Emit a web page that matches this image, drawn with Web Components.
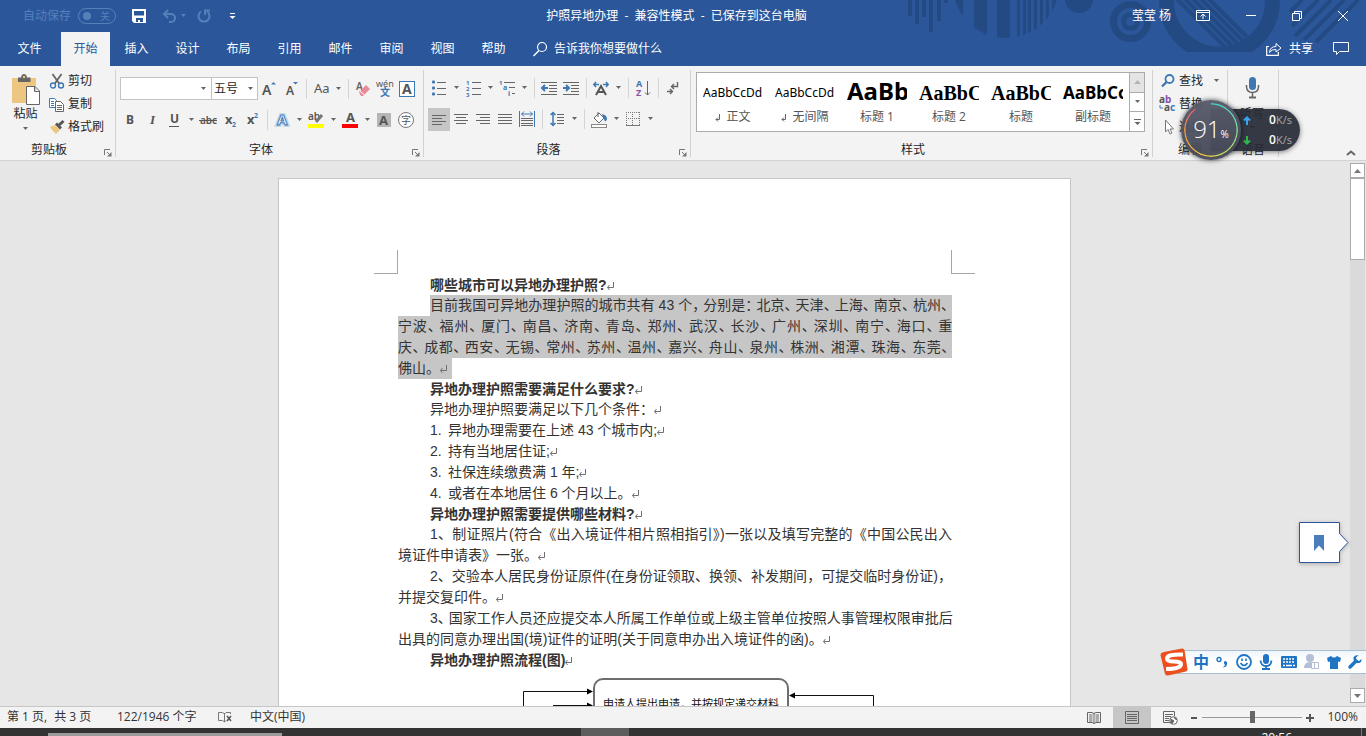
<!DOCTYPE html>
<html lang="zh-CN">
<head>
<meta charset="utf-8">
<title>护照异地办理 - Word</title>
<style>
html,body{margin:0;height:100%}
body{font:12px/16px "Open Sans","Noto Sans CJK SC",sans-serif;color:#262626;background:#e6e6e6;overflow:hidden}
</style>
</head>
<body>
<word-app></word-app>
<script>
const define = (name, html, connected) => customElements.define(name, class extends HTMLElement {
  constructor() {
    super();
    const t = document.createElement('template');
    t.innerHTML = html;
    this.attachShadow({mode: 'open'}).append(t.content.cloneNode(true));
  }
  connectedCallback() { if (connected) connected.call(this, this.shadowRoot); }
});

const G = '#666', B = '#3e78b3';
const lines = (rows, c = G) => rows.map(([x1, y, x2]) => `<path d="M${x1} ${y}H${x2}" stroke="${c}"/>`).join('');
const T = (x, y, s, size, fill, extra = '') => `<text x="${x}" y="${y}" font-size="${size}" fill="${fill}" ${extra}>${s}</text>`;
/* name: [width, height, markup] */
const ICONS = {
  save: [14, 14, `<path d="M0 0H14V14H2L0 12Z" fill="#fff"/><path d="M2 2H12V6.500H2ZM4 9H11V13H8V11H6V13H4Z" fill="#2b579a"/>`],
  undo: [14, 14, `<path d="M1.500 5H9a4 4 0 0 1 0 8H7" fill="none" stroke="#5580ba" stroke-width="2"/><path d="M6 1L2 5L6 9" fill="none" stroke="#5580ba" stroke-width="2"/>`],
  redo: [14, 14, `<path d="M4 2.500A5.500 5.500 0 1 0 10 2.500" fill="none" stroke="#5580ba" stroke-width="2"/><path d="M8 6V1.500H13" fill="none" stroke="#5580ba" stroke-width="2"/>`],
  custom: [7, 8, `<path d="M1 1.500H6" stroke="#fff"/><path d="M.5 4H6.500L3.500 7Z" fill="#fff"/>`],
  caret: [7, 4, `<path d="M1 0H6L3.500 3Z" fill="currentColor"/>`],
  caretup: [7, 4, `<path d="M0 4H7L3.500 0Z" fill="currentColor"/>`],
  caretdn: [7, 4, `<path d="M0 0H7L3.500 4Z" fill="currentColor"/>`],
  more: [7, 8, `<path d="M0 1.500H7" stroke="${G}"/><path d="M.5 4H6.500L3.500 7Z" fill="${G}"/>`],
  ribbonopt: [14, 12, `<path d="M.5 .5H13.500V10.500H.5ZM.5 2.500H13.500M7 4V9M4.500 6.500L7 4L9.500 6.500" fill="none" stroke="#fff"/>`],
  min: [10, 12, `<path d="M0 5.500H10" stroke="#fff"/>`],
  restore: [12, 12, `<path d="M1.500 3.500H8.500V10.500H1.500ZM3.500 3.500V1.500H10.500V8.500H8.500" fill="none" stroke="#fff"/>`],
  close: [12, 12, `<path d="M1 1L11 11M11 1L1 11" stroke="#fff"/>`],
  search: [16, 16, `<circle cx="10" cy="6" r="4.500" fill="none" stroke="#fff" stroke-width="1.200"/><path d="M7 9.500L1.500 15" stroke="#fff" stroke-width="1.400"/>`],
  share: [16, 14, `<path d="M3 4.500H.7V13.300H12.300V10" fill="none" stroke="#fff" stroke-width="1.200"/><path d="M3.500 10.500Q4 4.500 10 4.500V1.500L15 6L10 10V7.500Q5.500 7 3.500 10.500Z" fill="none" stroke="#fff"/>`],
  comment: [16, 15, `<path d="M.5 1.500H15.500V10.500H6.500L3.500 13.500V10.500H.5Z" fill="none" stroke="#fff"/>`],
  paste: [28, 32, `<rect x="0" y="4" width="24" height="25" rx="1" fill="#edc681"/><path d="M6 8V3.500H9Q9.500 0 12 0T15 3.500H18.500V8Z" fill="#666"/><circle cx="12" cy="3" r="1.200" fill="#edc681"/><path d="M14.500 12.500H23L27.500 17V30.500H14.500ZM22.500 12.500V17.500H27.500" fill="#fff" stroke="${G}"/>`],
  cut: [16, 16, `<path d="M3.500 1L10.500 11M12.500 1L5.500 11" stroke="${G}" stroke-width="1.800"/><circle cx="4" cy="12.500" r="2.500" fill="none" stroke="${B}" stroke-width="1.400"/><circle cx="12" cy="12.500" r="2.500" fill="none" stroke="${B}" stroke-width="1.400"/>`],
  copy: [16, 16, `<path d="M.5 2.500H5.500L7.500 4.500V11.500H.5ZM2 5.500H5M2 7.500H5M2 9.500H5" fill="#fff" stroke="${B}"/><path d="M6.500 5.500H11.500L14.500 8.500V15.500H6.500ZM8 9.500H13M8 11.500H13M8 13.500H13" fill="#fff" stroke="${G}"/>`],
  brush: [16, 16, `<path d="M1 8L6 6L11 11L7 15Q5 13 4 12T1 8Z" fill="#edc681"/><path d="M6 5.500L8 3.500L13 8.500L11 10.500Z" fill="#555"/><path d="M10 6L14.500 2" stroke="#555" stroke-width="3"/>`],
  launch: [8, 8, `<path d="M.5 6V.5H6M3 3L6.500 6.500" fill="none" stroke="#777"/><path d="M7.500 3V7.500H3Z" fill="#777"/>`],
  grow: [16, 16, T(1, 14, 'A', 14, '#555', 'font-weight="600"') + `<path d="M10 3.500H15L12.500 1Z" fill="${B}"/>`],
  shrink: [16, 16, T(3, 14, 'A', 12, '#555', 'font-weight="600"') + `<path d="M10 1H15L12.500 3.500Z" fill="${B}"/>`],
  aa: [18, 16, T(2, 12, 'Aa', 13, '#555')],
  eraser: [16, 16, T(1, 9, 'A', 10, '#666', 'font-weight="600"') + `<path d="M4 11L11 4L15 8L8 15H6Z" fill="#e8899a"/><path d="M5 10L9.500 14" stroke="#fff"/>`],
  wen: [16, 16, T(-1, 6, 'wén', 9, '#555') + T(3, 15, '文', 10, B, 'font-weight="bold"')],
  boxa: [16, 16, `<rect x=".5" y=".5" width="15" height="15" fill="#fff" stroke="${B}"/>` + T(3, 13, 'A', 14, '#555', 'font-weight="bold"')],
  bold: [16, 16, T(4, 12, 'B', 12, '#555', 'font-weight="bold"')],
  italic: [16, 16, T(6, 12, 'I', 13, '#555', 'font-style="italic" font-weight="bold" style="font-family:Liberation Serif"')],
  under: [16, 16, T(4, 11, 'U', 12, '#555', 'font-weight="bold"') + `<path d="M3 14.500H13" stroke="#555"/>`],
  strike: [18, 16, T(1, 12, 'abc', 10, '#555', 'font-weight="600"') + `<path d="M0 8.500H18" stroke="#555"/>`],
  sub: [16, 16, T(3, 12, 'x', 13, '#555', 'font-weight="bold"') + T(10, 15, '2', 7, B, 'font-weight="bold"')],
  sup: [16, 16, T(3, 12, 'x', 13, '#555', 'font-weight="bold"') + T(10, 6, '2', 7, B, 'font-weight="bold"')],
  glow: [16, 16, T(3, 13, 'A', 15, '#fff', `font-weight="bold" stroke="#c3d9ee" stroke-width="4"`) + T(3, 13, 'A', 15, '#fff', `font-weight="bold" stroke="${B}" stroke-width="1"`)],
  hilite: [16, 16, T(0, 8, 'ab', 10, '#555', 'font-weight="600"') + `<path d="M8 10L14 3" stroke="#777" stroke-width="3"/><rect y="12" width="16" height="4" fill="#ff0"/>`],
  color: [16, 16, T(4, 10, 'A', 13, '#555', 'font-weight="bold"') + `<rect y="12" width="16" height="4" fill="#f00"/>`],
  shade: [14, 14, `<rect width="14" height="14" fill="#b5b5b5"/>` + T(2, 12, 'A', 13, '#555', 'font-weight="bold"')],
  circle: [16, 16, `<circle cx="8" cy="8" r="7.500" fill="#fff" stroke="#777"/>` + T(3, 12, '字', 10, '#555')],
  bullets: [14, 16, [2, 8, 14].map(y => `<rect y="${y - 1.5}" width="3" height="3" rx="1" fill="${B}"/>`).join('') + lines([[5, 2.5, 14], [5, 8.5, 14], [5, 14.5, 14]])],
  numbers: [15, 16, ['1', '2', '3'].map((n, i) => T(0, 5 + i * 6, n, 6, B, 'font-weight="bold"')).join('') + lines([[6, 2.5, 15], [6, 8.5, 15], [6, 14.5, 15]])],
  multi: [17, 17, T(0, 5, '1', 6, B, 'font-weight="bold"') + T(4, 10, 'a', 7, B, 'font-weight="bold"') + T(9, 16, 'i', 7, B, 'font-weight="bold"') + lines([[5, 2.5, 16], [10, 7.5, 16], [13, 13.5, 16]])],
  outdent: [16, 14, lines([[0, 1.5, 16], [8, 4.5, 16], [8, 7.5, 16], [8, 10.5, 16], [0, 13.5, 16]]) + `<path d="M7 7H1M4 4L1 7L4 10" fill="none" stroke="${B}" stroke-width="2"/>`],
  indent: [16, 14, lines([[0, 1.5, 16], [8, 4.5, 16], [8, 7.5, 16], [8, 10.5, 16], [0, 13.5, 16]]) + `<path d="M0 7H6M3 4L6 7L3 10" fill="none" stroke="${B}" stroke-width="2"/>`],
  asian: [16, 14, `<path d="M3 14L8 5L13 14M5 11H11" fill="none" stroke="#555" stroke-width="2"/><path d="M6 3.500H1M3 1L.8 3.500L3 6M10 3.500H15M13 1L15.200 3.500L13 6" fill="none" stroke="${B}" stroke-width="1.500"/>`],
  sort: [14, 17, T(0, 7, 'A', 9, B, 'font-weight="bold"') + T(0, 16, 'Z', 9, '#8b50a8', 'font-weight="bold"') + `<path d="M11.500 1V15M9 12.500L11.500 15L14 12.500" fill="none" stroke="${G}"/>`],
  marks: [12, 14, `<path d="M10.500 1V5.500H5M7 3L4.500 5.500L7 8" fill="none" stroke="${G}" stroke-width="1.400"/><path d="M0 10.500H5M3 8L5.500 10.500L3 13" fill="none" stroke="${G}" stroke-width="1.400"/>`],
  left: [14, 12, lines([[0, 1.5, 14], [0, 4.5, 10], [0, 7.5, 14], [0, 10.5, 10]])],
  center: [14, 12, lines([[0, 1.5, 14], [2, 4.5, 12], [0, 7.5, 14], [2, 10.5, 12]])],
  right: [14, 12, lines([[0, 1.5, 14], [4, 4.5, 14], [0, 7.5, 14], [4, 10.5, 14]])],
  justify: [14, 12, lines([[0, 1.5, 14], [0, 4.5, 14], [0, 7.5, 14], [0, 10.5, 14]])],
  dist: [16, 16, `<path d="M.5 0V16M15.500 0V16M2.500 3H13.500M5 .5L2.500 3L5 5.500M11 .5L13.500 3L11 5.500" fill="none" stroke="${B}"/>` + lines([[2, 7.5, 14], [2, 9.5, 14], [2, 12.5, 14], [2, 14.5, 14]])],
  spacing: [14, 16, `<path d="M3 2V14M.5 4L3 1.500L5.500 4M.5 12L3 14.500L5.500 12" fill="none" stroke="${B}" stroke-width="1.500"/>` + lines([[7, 3.5, 14], [7, 6.5, 14], [7, 9.5, 14], [7, 12.5, 14]])],
  bucket: [17, 17, `<path d="M3 7L8 2L13 7L8 12ZM7 1V6" fill="#fff" stroke="${G}"/><path d="M11 3Q16 4 16 8Q15.500 10 14 10.500L12 6Z" fill="${B}"/><rect x=".5" y="13.500" width="15" height="3" fill="#fff" stroke="#888"/>`],
  borders: [14, 14, `<path d="M.5 0V14M13.500 0V14M0 .5H14M6.500 0V14M0 6.500H14" stroke="#777" stroke-dasharray="1 1" fill="none"/><path d="M0 13.500H14" stroke="#777"/>`],
  find: [14, 14, `<circle cx="8.500" cy="5" r="4" fill="none" stroke="${B}" stroke-width="1.800"/><path d="M5.500 8L1 12.500" stroke="${B}" stroke-width="2.400"/>`],
  replace: [17, 16, T(0, 7, 'a', 10, '#555', 'font-weight="bold"') + T(6, 7, 'b', 10, '#8b50a8', 'font-weight="bold"') + T(5, 15, 'a', 10, '#555', 'font-weight="bold"') + T(11, 15, 'c', 10, B, 'font-weight="bold"') + `<path d="M1 9V12H4" fill="none" stroke="${B}"/>`],
  select: [14, 16, `<path d="M4.500 1V13L7 10.500L9 15L11 14L9 10H12.500Z" fill="#fff" stroke="#777"/>`],
  mic: [14, 24, `<rect x="4" y="1" width="7" height="13" rx="3.500" fill="#3e78b3"/><path d="M1.500 9V11Q2 16.500 7.500 16.500T13.500 11V9M7.500 17V21" fill="none" stroke="#666" stroke-width="1.500"/><path d="M4 21.500H11" stroke="#666" stroke-width="2"/>`],
  collapse: [10, 6, `<path d="M1 5L5 1.500L9 5" fill="none" stroke="#666" stroke-width="2"/>`],
  ret: [8, 8, `<path d="M6.500 0V5.500H.5M2.500 3L.5 5.500L2.500 8" fill="none" stroke="#707070"/>`],
  ret2: [6, 9, `<path d="M4.500 1V6.500H1M3 4.500L1 6.500L3 8.500" fill="none" stroke="#666"/>`],
  proof: [14, 12, `<path d="M6.500 2V11L4.500 9.500H.5V1.500H4.500L6.500 3L8 1.500H12.500V3M6.500 11L8 9.500" fill="none" stroke="#777"/><path d="M9 5L13 10M13 5L9 10" stroke="#555" stroke-width="1.500"/>`],
  read: [14, 13, `<path d="M7 2V12.500L5 11.500H.5V1.500H5L7 2.500L9 1.500H13.500V11.500H9L7 12.500M2 4H5.500M2 6H5.500M2 8H5.500M2 10H5.500M8.500 4H12M8.500 6H12M8.500 8H12M8.500 10H12" fill="none" stroke="#666"/>`],
  layout: [14, 13, `<path d="M.5 .5H13.500V12.500H.5ZM2 3.500H12M2 5.500H12M2 7.500H12M2 9.500H12" fill="none" stroke="#666"/>`],
  web: [15, 14, `<path d="M7 11.500H.5V.5H11.500V5M2 3.500H10M2 5.500H8M2 7.500H6M2 9.500H6" fill="none" stroke="#666"/><circle cx="10.500" cy="9.500" r="3.800" fill="#fff" stroke="#666"/><path d="M8 8L11 10L9 12.500L8 11ZM11 6.500L13.500 9L12.500 7.500Z" fill="#666" stroke="#666"/>`],
  minus: [8, 8, `<path d="M1 4H7" stroke="#555" stroke-width="2"/>`],
  plus: [8, 8, `<path d="M0 4H8M4 0V8" stroke="#555" stroke-width="2"/>`],
  bookmark: [10, 16, `<path d="M0 0H10V16L5 10.500L0 16Z" fill="#4a7ebb"/>`],
  up: [8, 9, `<path d="M4 9V3M1 4.500L4 1.500L7 4.500" fill="none" stroke="#37a6ee" stroke-width="2"/>`],
  down: [8, 9, `<path d="M4 0V6M1 4.500L4 7.500L7 4.500" fill="none" stroke="#2eb84a" stroke-width="2"/>`],
  sogou: [28, 28, `<path d="M4 4L22 .5Q24 .5 24.500 2L27.500 21Q27.500 23 26 23.500L8 27.500Q5.500 27.500 5 26L.5 7Q.5 4.500 4 4Z" fill="#ee4f1e"/><path d="M23 6.500Q7 6 7 10.500Q7 13.500 14 13.500Q21.500 13.500 21 16.500Q20 21 6 21" fill="none" stroke="#fff" stroke-width="4"/>`],
  dots: [12, 12, `<circle cx="3" cy="3.500" r="2" fill="none" stroke="#1f74c4" stroke-width="1.400"/><path d="M7 11Q9.500 10 8.500 8A1.600 1.600 0 1 1 11 7Q11.500 11 7 11.500Z" fill="#1f74c4"/>`],
  smile: [16, 16, `<circle cx="8" cy="8" r="7" fill="none" stroke="#1f74c4" stroke-width="1.800"/><path d="M4.500 9Q8 14 11.500 9M6 4.500V7M10 4.500V7" fill="none" stroke="#1f74c4" stroke-width="1.600"/>`],
  imemic: [14, 16, `<rect x="4" y="0" width="6" height="10" rx="3" fill="#1f74c4"/><path d="M1.500 6.500Q2 12 7 12T12.500 6.500M7 12V15M3 15H11" fill="none" stroke="#1f74c4" stroke-width="1.800"/>`],
  keyboard: [16, 12, `<rect width="16" height="12" rx="1" fill="#1f74c4"/><path d="M2 3H14M2 6H14" stroke="#fff" stroke-width="1.500" stroke-dasharray="2 1"/><path d="M2 9.500H4M5 9.500H11M12 9.500H14" stroke="#fff" stroke-width="1.500"/>`],
  person: [15, 16, `<circle cx="6" cy="4" r="4" fill="#b4bfd6"/><path d="M0 14Q0 8 6 8T12 14Z" fill="#b4bfd6"/><path d="M7.500 8.500H10.500V14.500H7.500ZM10.500 8.500H14.500V14.500H10.500Z" fill="#fff" stroke="#b4bfd6"/>`],
  shirt: [14, 13, `<path d="M0 2L4 0Q7 3 10 0L14 2L13 6L11 5.500V13H3V5.500L1 6Z" fill="#1f74c4"/>`],
  wrench: [14, 14, `<path d="M2 12L8 6" stroke="#1f74c4" stroke-width="3.500" stroke-linecap="round"/><path d="M13.500 4L11 6L8.500 5L8 2.500L10.500 .3Q7 -.5 5.500 2.500Q5 5.500 7 7T11 8Q14 7 13.500 4Z" fill="#1f74c4"/>`]
};

define('wd-icon', `<style>:host{display:inline-block;flex:none}svg{display:block;overflow:visible;font-family:"Noto Sans","Noto Sans CJK SC",sans-serif}</style>`, function (r) {
  if (r.querySelector('svg')) return;
  const [w, h, m] = ICONS[this.getAttribute('name')];
  r.innerHTML += `<svg width="${w}" height="${h}" viewBox="0 0 ${w} ${h}" aria-hidden="true">${m}</svg>`;
});
const I = n => `<wd-icon name="${n}"></wd-icon>`;
const RESET = `*{box-sizing:border-box}button{all:unset;box-sizing:border-box;display:flex;align-items:center;justify-content:center;white-space:nowrap}`;

/* square tool button, optionally with a drop-down caret */
define('tool-btn', `<style>${RESET}:host{display:flex;height:22px;color:#666}.m{width:22px;height:22px}.c{width:12px;height:22px}:host([on]) .m{background:#c6c6c6;height:23px}</style>`, function (r) {
  const n = this.getAttribute('icon'), l = this.getAttribute('label') || n;
  r.innerHTML += `<button class="m" aria-label="${l}">${I(n)}</button>` + (this.hasAttribute('caret') ? `<button class="c" aria-label="${l} 选项">${I('caret')}</button>` : '');
});
define('tool-sep', `<style>:host{display:flex;justify-content:center;width:8px;height:20px}i{width:1px;background:#d5d5d5}</style><i></i>`);
const tb = (n, c) => n === '|' ? '<tool-sep></tool-sep>' : `<tool-btn icon="${n.replace('+', '')}" ${n.endsWith('+') ? 'caret' : ''} ${n === 'left' ? 'on' : ''}></tool-btn>`;
const row = s => s.split(' ').map(n => tb(n)).join('');

/* row button: small icon and text */
define('text-btn', `<style>${RESET}:host{display:flex;height:23px}button{gap:4px}.i{width:15px;display:flex;justify-content:center}.k{margin-left:6px;color:#666;display:flex}</style>`, function (r) {
  r.innerHTML += `<button><span class="i">${I(this.getAttribute('icon'))}</span><slot></slot>${this.hasAttribute('caret') ? `<span class="k">${I('caret')}</span>` : ''}</button>`;
});

define('ribbon-group', `<style>${RESET}
:host{display:flex;flex-direction:column;height:87px;border-right:1px solid #d2d2d2;flex:none;box-sizing:border-box}
.body{flex:1;min-height:0}
footer{display:flex;height:14px;line-height:14px;align-items:flex-end}
footer span{flex:1;text-align:center}
:host([launcher]) footer span{padding-right:6px}
footer button{width:8px;margin-right:3px}</style>
<div class="body"><slot></slot></div><footer><span></span></footer>`, function (r) {
  r.querySelector('span').textContent = this.getAttribute('label');
  if (this.hasAttribute('launcher') && !r.querySelector('button')) r.querySelector('footer').insertAdjacentHTML('beforeend', `<button aria-label="更多">${I('launch')}</button>`);
});

define('title-bar', `<style>${RESET}
:host{display:grid;grid-template-columns:1fr auto 1fr;height:32px;align-items:center;color:#fff;position:relative;padding-right:13px}
.l,.r{display:flex;align-items:center}
.l{padding-left:23px;color:#5580ba}
.sw{width:38px;height:16px;border:1px solid #5580ba;border-radius:8px;margin:0 16px 0 7px;display:flex;align-items:center;justify-content:space-between;padding:0 5px 0 4px;font-size:10px}
.sw i{width:8px;height:8px;border-radius:50%;background:#5580ba}
h1{font:inherit;margin:0;white-space:pre}
.r{justify-content:flex-end;margin-right:4px}
.ub{margin-left:16px}.ca{margin:0 10px 0 4px}.cu{margin-left:18px}
.r span{margin-right:26px}.r button{margin-left:34px;width:12px}.r button:first-of-type{margin-left:0;margin-right:2px}
</style>
<div class="l"><span>自动保存</span><button class="sw" role="switch" aria-checked="false" aria-label="自动保存"><i></i>关</button>
<button aria-label="保存">${I('save')}</button><button class="ub" aria-label="撤消">${I('undo')}</button><button class="ca" aria-label="撤消列表">${I('caret')}</button><button aria-label="重做">${I('redo')}</button><button class="cu" aria-label="自定义">${I('custom')}</button></div>
<h1>护照异地办理  -  兼容性模式  -  已保存到这台电脑</h1>
<div class="r"><span>莹莹 杨</span><button aria-label="功能区显示选项">${I('ribbonopt')}</button><button aria-label="最小化">${I('min')}</button><button aria-label="还原">${I('restore')}</button><button aria-label="关闭">${I('close')}</button></div>`);

define('ribbon-tabs', `<style>${RESET}
:host{display:flex;height:34px;gap:2px;align-items:stretch;color:#fff;position:relative}
button{width:49px;padding-bottom:1px}
.file{width:59px}
.on{background:#f3f3f3;color:#2b579a}
label{display:flex;align-items:center;gap:6px;margin-left:12px}
input{all:unset;width:120px;color:#fff}input::placeholder{color:#fff;opacity:1}
.end{margin-left:auto;display:flex;gap:20px;padding-right:17px}
.end button{width:auto;gap:7px}
</style>
${['文件', '开始', '插入', '设计', '布局', '引用', '邮件', '审阅', '视图', '帮助'].map((t, i) => `<button class="${['file', 'on'][i] || ''}">${t}</button>`).join('')}
<label>${I('search')}<input placeholder="告诉我你想要做什么" aria-label="告诉我你想要做什么"></label>
<div class="end"><button>${I('share')}共享</button><button aria-label="批注">${I('comment')}</button></div>`);

define('header-art', `<style>:host{display:block;position:absolute;right:0;top:0;width:466px;height:66px}svg{display:block}</style>
<svg width="466" height="66" viewBox="900 0 466 66" fill="#244a84" aria-hidden="true">
<defs><clipPath id="c1"><circle cx="1006" cy="-15" r="53"/></clipPath><clipPath id="c2"><circle cx="1219.500" cy="1" r="46"/></clipPath><clipPath id="c3"><path d="M1150 0H1290V52H1150Z"/></clipPath></defs>
<path d="M908 0h4v16h-4zM915 0h4v24h-4zM922 0h4v17h-4zM929 0h4v32h-4zM937 0h4v21h-4zM944 0h4v3h-4z"/>
<path clip-path="url(#c1)" d="M950 0h13v40h-13zM974 0h13v40h-13zM997 0h13v40h-13zM1017 0h3v40h-3zM1023 0h3v40h-3zM1028 0h3v40h-3zM1034 0h3v40h-3zM1040 0h3v40h-3zM1046 0h3v40h-3zM1052 0h5v40h-5z"/>
<circle cx="1079" cy="-1" r="14"/>
<circle cx="1130.500" cy="21.500" r="17" fill="none" stroke="#244a84" stroke-width="7"/><circle cx="1130.500" cy="21.500" r="7" fill="none" stroke="#244a84" stroke-width="5"/>
<circle clip-path="url(#c3)" cx="1219.500" cy="1" r="53" fill="none" stroke="#244a84" stroke-width="15"/>
<g clip-path="url(#c2)" stroke="#244a84" stroke-width="4"><path d="M1170 -8L1230 52M1178 -8L1238 52M1186 -8L1246 52M1194 -8L1254 52M1202 -8L1262 52" /></g>
<path d="M1302 0L1290 12M1318 0L1292 26M1331 0L1295 36M1344 0L1304 40M1358 0L1316 42" stroke="#244a84" stroke-width="4"/>
</svg>`);

define('style-gallery', `<style>${RESET}
:host{display:flex;height:60px;border:1px solid #ababab;background:#fff}
.it{width:72px;flex-direction:column;justify-content:flex-start;padding-top:5px;color:#555}
b{display:block;width:60px;height:31px;overflow:hidden;font:400 12px/30px "Noto Sans",sans-serif;color:#000;white-space:nowrap;text-align:left}
.it span{display:flex;align-items:center;gap:5px;height:16px}
.nav{display:flex;flex-direction:column;width:15px;border-left:1px solid #ababab;color:#666}
.nav button{flex:1;border-bottom:1px solid #ababab}.nav button:first-child{background:#e4e4e4;color:#b5b5b5}.nav button:last-child{border:0}
.h1 b{font:700 24px/26px "Noto Sans",sans-serif}.h2 b{font:700 20px/31px "Liberation Serif",serif}.h3 b{font:700 17px/30px "Noto Sans",sans-serif}
</style>
${[['', 'AaBbCcDd', '正文', 1], ['', 'AaBbCcDd', '无间隔', 1], ['h1', 'AaBbC', '标题 1'], ['h2', 'AaBbC', '标题 2'], ['h2', 'AaBbC', '标题'], ['h3', 'AaBbCc', '副标题']].map(([c, s, l, m]) => `<button class="it ${c}"><b>${s}</b><span>${m ? I('ret2') : ''}${l}</span></button>`).join('')}
<div class="nav"><button aria-label="向上">${I('caretup')}</button><button aria-label="向下">${I('caret')}</button><button aria-label="更多样式">${I('more')}</button></div>`);

define('word-ribbon', `<style>${RESET}
:host{display:flex;height:95px;padding-top:4px;background:#f3f3f3;border-bottom:1px solid #d2d2d2;box-sizing:border-box}
.clip{width:116px}.clipb{display:flex;padding-left:12px;margin-top:-1px}
.paste{flex-direction:column;width:27px;margin-right:10px;padding-top:5px;justify-content:flex-start}
.paste wd-icon:last-child{margin-top:5px;color:#666}
.font{width:308px}.para{width:267px}.style{width:462px}.edit{width:75px}.voice{width:51px}
.rows{display:grid;gap:9px;padding:7px 0 0 4px}
.rows div{display:flex;align-items:center}
.font .rows{padding-left:3px}
.combo{display:flex;align-items:center;height:23px;border:1px solid #c3c3c3;background:#fff;color:#666}
.combo+.combo{border-left:0}
.combo input{all:unset;font-size:12px;color:#262626;padding-left:2px;height:20px;line-height:20px}
.f1{width:92px;margin-left:1px}.f1 input{width:77px}.f2{width:46px}.f2 input{width:33px}
.style style-gallery{margin:2px 7px 0 5px}
.eb{padding-left:7px;margin-top:-1px}
.mic{flex-direction:column;width:48px;padding-top:6px}.mic span{margin-top:6px}.mic wd-icon:last-child{margin-top:4px;color:#666}
.fold{margin:78px 10px 0 auto;height:10px}
</style>
<ribbon-group class="clip" label="剪贴板" launcher><div class="clipb">
<button class="paste">${I('paste')}<span>粘贴</span>${I('caret')}</button>
<div><text-btn icon="cut">剪切</text-btn><text-btn icon="copy">复制</text-btn><text-btn icon="brush">格式刷</text-btn></div></div></ribbon-group>
<ribbon-group class="font" label="字体" launcher><div class="rows">
<div><span class="combo f1"><input aria-label="字体">${I('caret')}</span><span class="combo f2"><input aria-label="字号" value="五号">${I('caret')}</span>${row('grow shrink | aa+ | eraser wen boxa')}</div>
<div>${row('bold italic under+ strike sub sup | glow+ hilite+ color+ shade circle')}</div></div></ribbon-group>
<ribbon-group class="para" label="段落" launcher><div class="rows">
<div>${row('bullets+ numbers+ multi+ | outdent indent | asian+ | sort | marks')}</div>
<div>${row('left center right justify dist | spacing+ | bucket+ borders+')}</div></div></ribbon-group>
<ribbon-group class="style" label="样式" launcher><style-gallery></style-gallery></ribbon-group>
<ribbon-group class="edit" label="编辑"><div class="eb"><text-btn icon="find" caret>查找</text-btn><text-btn icon="replace">替换</text-btn><text-btn icon="select" caret>选择</text-btn></div></ribbon-group>
<ribbon-group class="voice" label="语音"><button class="mic">${I('mic')}<span>听写</span>${I('caret')}</button></ribbon-group>
<button class="fold" aria-label="折叠功能区">${I('collapse')}</button>`);

/* text line of the document; punctuation is set tighter than a full cell */
const tight = s => s.replace(/[、，：]/g, '<i>$&</i>').replace('↵', I('ret'));
const P = (cls, s) => `<span class="${cls}">${tight(s)}</span>`;
define('doc-page', `<style>*{box-sizing:border-box}
:host{display:block;width:793px;background:#fff;border:1px solid #c6c6c6;padding:71px 95px 0;box-sizing:border-box;font:14px/21px "Liberation Sans","Noto Sans CJK SC",sans-serif;color:#333}
.marks{display:flex;justify-content:space-between;height:24px;margin-bottom:1px}
.marks i{width:24px;border:solid #a6a6a6;border-width:0 1px 1px 0}.marks i:last-child{border-width:0 0 1px 1px}
article{margin:0 23px 0 24px}
h2,p,ol{margin:0;padding:0;font-size:14px}
h2{line-height:20px;padding-left:32px}
p span,li{display:block;white-space:nowrap;height:21px}
ol{list-style:none;padding-left:32px}
li b{font-weight:400;display:inline-block;width:18px}
.in{margin-left:32px}.full{text-align-last:justify}
.sel span{background:#c6c6c6}.sel .end{width:54px}
i{font-style:normal;margin-right:-3px}.marks i{margin:0}
.wide i{margin-right:0}
figure{margin:8px 0 0 125px;display:grid;grid-template-columns:70px 196px 85px;height:80px}
.node{border:2px solid #6d6d6d;border-radius:10px;font-size:11px;line-height:16px;padding:16px 0;text-align:center;color:#111;white-space:nowrap}
svg{display:block}
</style>
<div class="marks"><i></i><i></i></div>
<article>
<h2>${tight('哪些城市可以异地办理护照?↵')}</h2>
<p class="sel">${P('in full', '目前我国可异地办理护照的城市共有 43 个，分别是：北京、天津、上海、南京、杭州、')}${P('full', '宁波、福州、厦门、南昌、济南、青岛、郑州、武汉、长沙、广州、深圳、南宁、海口、重')}${P('full', '庆、成都、西安、无锡、常州、苏州、温州、嘉兴、舟山、泉州、株洲、湘潭、珠海、东莞、')}${P('end', '佛山。↵')}</p>
<h2>${tight('异地办理护照需要满足什么要求?↵')}</h2>
<p class="wide">${P('in', '异地办理护照要满足以下几个条件：↵')}</p>
<ol>${['异地办理需要在上述 43 个城市内;↵', '持有当地居住证;↵', '社保连续缴费满 1 年;↵', '或者在本地居住 6 个月以上。↵'].map((s, i) => `<li><b>${i + 1}.</b>${tight(s)}</li>`).join('')}</ol>
<h2>${tight('异地办理护照需要提供哪些材料?↵')}</h2>
<p class="wide">${P('in full', '1、制证照片(符合《出入境证件相片照相指引》)一张以及填写完整的《中国公民出入')}${P('', '境证件申请表》一张。↵')}</p>
<p class="wide">${P('in full', '2、交验本人居民身份证原件(在身份证领取、换领、补发期间，可提交临时身份证)，')}${P('', '并提交复印件。↵')}</p>
<p>${P('in full', '3、国家工作人员还应提交本人所属工作单位或上级主管单位按照人事管理权限审批后')}${P('', '出具的同意办理出国(境)证件的证明(关于同意申办出入境证件的函)。↵')}</p>
<h2>${tight('异地办理护照流程(图)↵')}</h2>
<figure><svg width="70" height="80" aria-hidden="true"><path d="M.5 80V13.500H64M30 27.500H64" fill="none" stroke="#111"/><path d="M64 10.500V16.500L70 13.500ZM64 24.500V30.500L70 27.500Z"/></svg><div class="node">申请人提出申请，并按规定递交材料</div><svg width="85" height="80" aria-hidden="true"><path d="M6 17.500H84.500V80" fill="none" stroke="#111"/><path d="M6 14.500V20.500L0 17.500Z"/></svg></figure>
</article>`);

define('scroll-bar', `<style>${RESET}:host{display:flex;flex-direction:column;width:15px;background:#dadada;margin:2px 1px 3px 1px;color:#777}
button{height:15px;background:#fff;border:1px solid #ababab}.t{height:82px;background:#fff;border:1px solid #ababab}.s{flex:1}</style>
<button aria-label="向上滚动">${I('caretup')}</button><div class="t"></div><div class="s"></div><button aria-label="向下滚动">${I('caretdn')}</button>`);

define('status-bar', `<style>${RESET}
:host{display:flex;height:22px;border-top:1px solid #c6c6c6;background:#f3f3f3;align-items:stretch;color:#333;flex:none;box-sizing:border-box}
span{display:flex;align-items:center;white-space:pre;padding-bottom:1px;gap:7px}
.a{display:grid;padding-left:7px;grid-template-columns:110px 101px 32px auto}.b{margin-left:auto;align-items:stretch;display:flex}
.b button{width:38px}.b .on{background:#c6c6c6}.b .z{width:10px}
input{appearance:none;width:100px;margin:0 3px;background:none;align-self:center;height:12px}
input::-webkit-slider-runnable-track{height:1px;background:#999}
input::-webkit-slider-thumb{appearance:none;width:5px;height:12px;margin-top:-6px;background:#666}
.p{width:51px;justify-content:flex-end;padding-right:8px}
</style>
<div class="a"><span><b style="font-weight:400">第 1 页,</b>共 3 页</span><span>122/1946 个字</span><span>${I('proof')}</span><span>中文(中国)</span></div>
<div class="b"><button aria-label="阅读视图">${I('read')}</button><button class="on" aria-label="页面视图">${I('layout')}</button><button aria-label="Web 版式">${I('web')}</button><button class="z" aria-label="缩小">${I('minus')}</button><input type="range" value="50" aria-label="缩放"><button class="z" aria-label="放大">${I('plus')}</button><span class="p">100%</span></div>`);

define('task-bar', `<style>:host{display:flex;height:8px;overflow:hidden;background:#333;color:#fff;flex:none;align-items:flex-start;padding:0 4px 0 48px}
.s{width:234px;height:3px;background:#9b9b9b;margin-top:5px}.t{width:48px;height:8px;background:#5d5d5d;margin-left:299px}
.c{display:flex;gap:69px;margin-left:auto}.c span{margin-top:2px}.c i{width:1px;height:8px;background:#777}</style>
<div class="s"></div><div class="t"></div><div class="c"><span>20:56</span><i></i></div>`);

define('net-meter', `<style>:host{position:absolute;right:66px;top:100px;width:119px;height:60px;color:#fff}
.pill{position:absolute;left:30px;right:0;top:9px;height:42px;box-sizing:border-box;border-radius:0 21px 21px 0;background:rgba(38,42,54,.93);padding:0 8px 0 30px;display:grid;align-content:space-evenly;box-shadow:0 1px 5px rgba(0,0,0,.5)}
.pill div{display:flex;align-items:center}.pill b{font:600 12px/18px "Open Sans",sans-serif;margin-left:auto}.pill small{font:11px/18px "Open Sans",sans-serif;color:#aaa}
.pill wd-icon{margin-left:2px}
.ball{position:absolute;left:0;top:0;width:60px;height:60px;border-radius:50%;background:linear-gradient(rgba(88,91,106,.97),rgba(68,71,86,.95));box-shadow:0 0 5px rgba(0,0,0,.7);display:flex;align-items:baseline;justify-content:center;font:300 24px/58px "Open Sans",sans-serif}
.ball small{font:10px/58px "Open Sans",sans-serif}
.ring{position:absolute;inset:3px;border-radius:50%;background:conic-gradient(#3fd8d2,#7fe09a 25%,#c6e25a 42%,#f2c23c 55%,#f09a45 75%,#ee5a72 90%,transparent 90%);mask:radial-gradient(closest-side,transparent 25px,#000 26px)}
</style>
<div class="pill"><div>${I('up')}<b>0</b><small>K/s</small></div><div>${I('down')}<b>0</b><small>K/s</small></div></div>
<div class="ball"><span class="ring"></span>91<small>%</small></div>`);

define('ime-bar', `<style>:host{position:absolute;right:0;bottom:60px;height:28px;display:flex;align-items:center;width:206px}
.logo{position:relative;z-index:1;width:28px;height:28px}
.bar{flex:1;height:24px;box-sizing:border-box;margin-left:-16px;border:solid #a9bfd3;border-width:1px 0;background:linear-gradient(#eef5fa,#fff 40%,#fff);display:flex;align-items:center;justify-content:space-between;padding:0 4px 0 21px;color:#1f74c4;font-size:16px;font-weight:700}
</style><div class="logo">${I('sogou')}</div><div class="bar"><span>中</span>${['dots', 'smile', 'imemic', 'keyboard', 'person', 'shirt', 'wrench'].map(I).join('')}</div>`);

define('bookmark-tip', `<style>:host{position:absolute;right:18px;bottom:173px;width:49px;height:41px;filter:drop-shadow(0 1px 2px rgba(0,0,0,.25))}
.b{display:grid;place-items:center;width:49px;height:41px;position:relative;padding:0 10px 0 0;box-sizing:border-box}svg{position:absolute;left:0;top:0}wd-icon{position:relative}</style>
<div class="b"><svg width="50" height="41" aria-hidden="true"><path d="M.5 .5H40.500V11.500L49 20.500L40.500 29.500V40.500H.5Z" fill="#fff" stroke="#2b579a"/></svg>${I('bookmark')}</div>`);

define('word-app', `<style>
:host{display:flex;flex-direction:column;height:100vh;position:relative;overflow:hidden}
header{background:#2b579a;position:relative;flex:none}
main{flex:1;min-height:0;display:flex;overflow:hidden;background:#e6e6e6}
.canvas{flex:1;overflow:hidden;display:flex;justify-content:center;align-items:flex-start;padding-top:17px}
doc-page{flex:none}word-ribbon{flex:none}
</style>
<header><header-art></header-art><title-bar></title-bar><ribbon-tabs></ribbon-tabs></header>
<word-ribbon></word-ribbon>
<main><div class="canvas"><doc-page></doc-page></div><scroll-bar></scroll-bar></main>
<status-bar></status-bar><task-bar></task-bar>
<net-meter></net-meter><ime-bar></ime-bar><bookmark-tip></bookmark-tip>`);
</script>
</body>
</html>
